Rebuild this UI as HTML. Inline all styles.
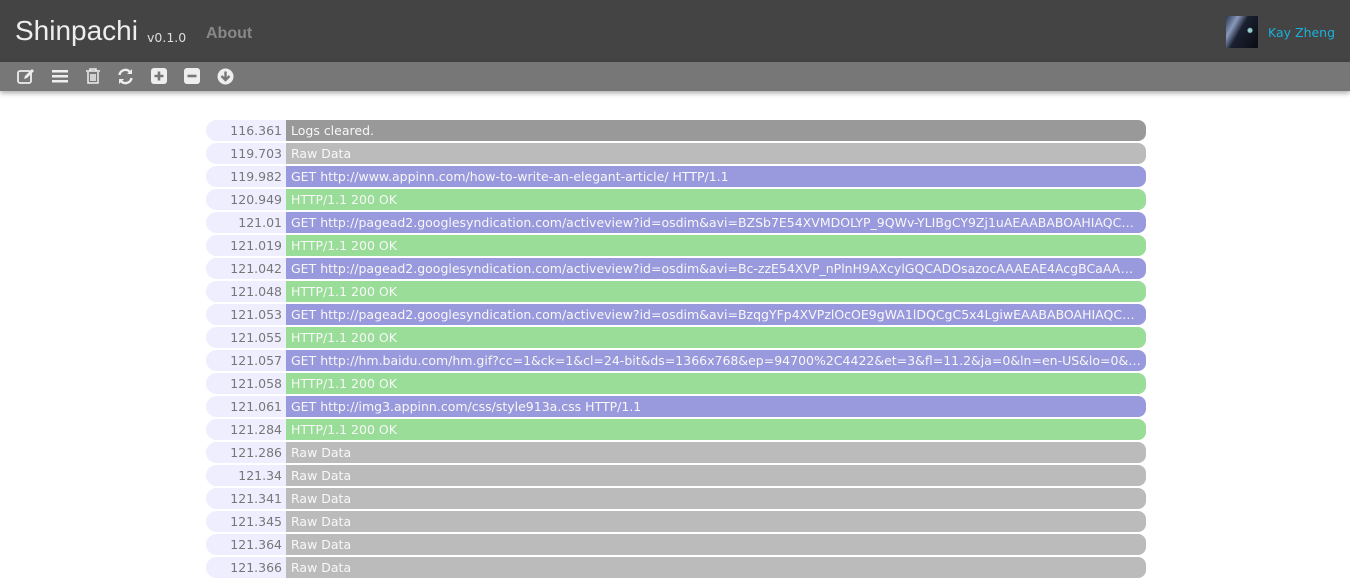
<!DOCTYPE html>
<html><head><style>
body{margin:0;background:#fff;font-family:"Liberation Sans",sans-serif;width:1350px;height:570px;overflow:hidden;position:relative}
.hd{position:absolute;left:0;top:0;width:1350px;height:62px;background:#444}
.brand{position:absolute;left:15px;top:15px;font-size:28px;color:#eee}
.ver{position:absolute;left:147px;top:30px;font-size:12.5px;color:#ddd;font-family:"DejaVu Sans",sans-serif}
.about{position:absolute;left:206px;top:25px;font-size:16px;font-weight:bold;color:#888}
.av{position:absolute;left:1226px;top:16px;width:32px;height:32px;background:radial-gradient(circle at 75% 45%,#9cc 0 2px,transparent 3px),linear-gradient(120deg,#2a3550 0%,#8899bb 25%,#1a2030 45%,#0a0c12 100%)}
.user{position:absolute;left:1268px;top:25px;font-size:12.5px;color:#1ab0dd;font-family:"DejaVu Sans",sans-serif}
.tb{position:absolute;left:0;top:62px;width:1350px;height:29px;background:#777;box-shadow:0 2px 5px rgba(0,0,0,.35)}
.tb svg{position:absolute;top:6px}
.row{position:absolute;left:206px;height:21px;width:940px;font-size:12.5px;line-height:21px;font-family:"DejaVu Sans",sans-serif}
.t{position:absolute;left:0;top:0;width:76px;height:21px;background:#eeeeff;border-radius:11px 0 0 11px;text-align:right;color:#777;padding-right:4px}
.m{position:absolute;left:80px;top:0;width:850px;height:21px;border-radius:0 8px 8px 0;color:#f8f8f8;padding-left:5px;padding-right:5px;white-space:nowrap;overflow:hidden;text-overflow:ellipsis}
.g{background:#999}.r{background:#bbb}.p{background:#9999dd}.k{background:#99dd99}
</style></head><body>
<div class="hd"><div class="brand">Shinpachi</div><div class="ver">v0.1.0</div><div class="about">About</div><div class="av"></div><div class="user">Kay Zheng</div></div>
<div class="tb">
<svg style="left:17px" width="19" height="17" viewBox="0 0 19 17"><rect x="1" y="3" width="13" height="12" rx="2" fill="none" stroke="#eee" stroke-width="1.8"/><path d="M7 11l1-3 7-7 2 2-7 7z" fill="#eee"/></svg>
<svg style="left:52px" width="16" height="16" viewBox="0 0 16 16"><rect x="0" y="2" width="16" height="2.5" fill="#eee"/><rect x="0" y="7" width="16" height="2.5" fill="#eee"/><rect x="0" y="12" width="16" height="2.5" fill="#eee"/></svg>
<svg style="left:85px" width="16" height="17" viewBox="0 0 16 17"><path d="M1 3h14M5 3V1h6v2M3 4v11h10V4M6 6v7M8 6v7M10 6v7" fill="none" stroke="#eee" stroke-width="1.5"/></svg>
<svg style="left:117px" width="17" height="17" viewBox="0 0 17 17"><path d="M2.5 7a6 6 0 0 1 10.5-3M14.5 10a6 6 0 0 1-10.5 3" fill="none" stroke="#eee" stroke-width="2.4"/><path d="M15 1v5h-5zM2 16v-5h5z" fill="#eee"/></svg>
<svg style="left:151px" width="16" height="16" viewBox="0 0 16 16"><rect width="16" height="16" rx="3" fill="#eee"/><path d="M8 3.5v9M3.5 8h9" stroke="#777" stroke-width="2.6"/></svg>
<svg style="left:184px" width="16" height="16" viewBox="0 0 16 16"><rect width="16" height="16" rx="3" fill="#eee"/><path d="M3.5 8h9" stroke="#777" stroke-width="2.6"/></svg>
<svg style="left:217px" width="17" height="17" viewBox="0 0 17 17"><circle cx="8.5" cy="8.5" r="8" fill="#eee"/><path d="M8.5 3.5v7M4.5 8l4 4 4-4" fill="none" stroke="#777" stroke-width="2.4"/></svg>
</div>
<div class="row" style="top:120px"><div class="t">116.361</div><div class="m g">Logs cleared.</div></div>
<div class="row" style="top:143px"><div class="t">119.703</div><div class="m r">Raw Data</div></div>
<div class="row" style="top:166px"><div class="t">119.982</div><div class="m p">GET http://www.appinn.com/how-to-write-an-elegant-article/ HTTP/1.1</div></div>
<div class="row" style="top:189px"><div class="t">120.949</div><div class="m k">HTTP/1.1 200 OK</div></div>
<div class="row" style="top:212px"><div class="t">121.01</div><div class="m p">GET http://pagead2.googlesyndication.com/activeview?id=osdim&amp;avi=BZSb7E54XVMDOLYP_9QWv-YLIBgCY9Zj1uAEAABABOAHIAQCABAAAAAA</div></div>
<div class="row" style="top:235px"><div class="t">121.019</div><div class="m k">HTTP/1.1 200 OK</div></div>
<div class="row" style="top:258px"><div class="t">121.042</div><div class="m p">GET http://pagead2.googlesyndication.com/activeview?id=osdim&amp;avi=Bc-zzE54XVP_nPlnH9AXcylGQCADOsazocAAAEAE4AcgBCaAAAAAA</div></div>
<div class="row" style="top:281px"><div class="t">121.048</div><div class="m k">HTTP/1.1 200 OK</div></div>
<div class="row" style="top:304px"><div class="t">121.053</div><div class="m p">GET http://pagead2.googlesyndication.com/activeview?id=osdim&amp;avi=BzqgYFp4XVPzlOcOE9gWA1lDQCgC5x4LgiwEAABABOAHIAQCAAAAA</div></div>
<div class="row" style="top:327px"><div class="t">121.055</div><div class="m k">HTTP/1.1 200 OK</div></div>
<div class="row" style="top:350px"><div class="t">121.057</div><div class="m p">GET http://hm.baidu.com/hm.gif?cc=1&amp;ck=1&amp;cl=24-bit&amp;ds=1366x768&amp;ep=94700%2C4422&amp;et=3&amp;fl=11.2&amp;ja=0&amp;ln=en-US&amp;lo=0&amp;lt=1400000000</div></div>
<div class="row" style="top:373px"><div class="t">121.058</div><div class="m k">HTTP/1.1 200 OK</div></div>
<div class="row" style="top:396px"><div class="t">121.061</div><div class="m p">GET http://img3.appinn.com/css/style913a.css HTTP/1.1</div></div>
<div class="row" style="top:419px"><div class="t">121.284</div><div class="m k">HTTP/1.1 200 OK</div></div>
<div class="row" style="top:442px"><div class="t">121.286</div><div class="m r">Raw Data</div></div>
<div class="row" style="top:465px"><div class="t">121.34</div><div class="m r">Raw Data</div></div>
<div class="row" style="top:488px"><div class="t">121.341</div><div class="m r">Raw Data</div></div>
<div class="row" style="top:511px"><div class="t">121.345</div><div class="m r">Raw Data</div></div>
<div class="row" style="top:534px"><div class="t">121.364</div><div class="m r">Raw Data</div></div>
<div class="row" style="top:557px"><div class="t">121.366</div><div class="m r">Raw Data</div></div>
</body></html>
